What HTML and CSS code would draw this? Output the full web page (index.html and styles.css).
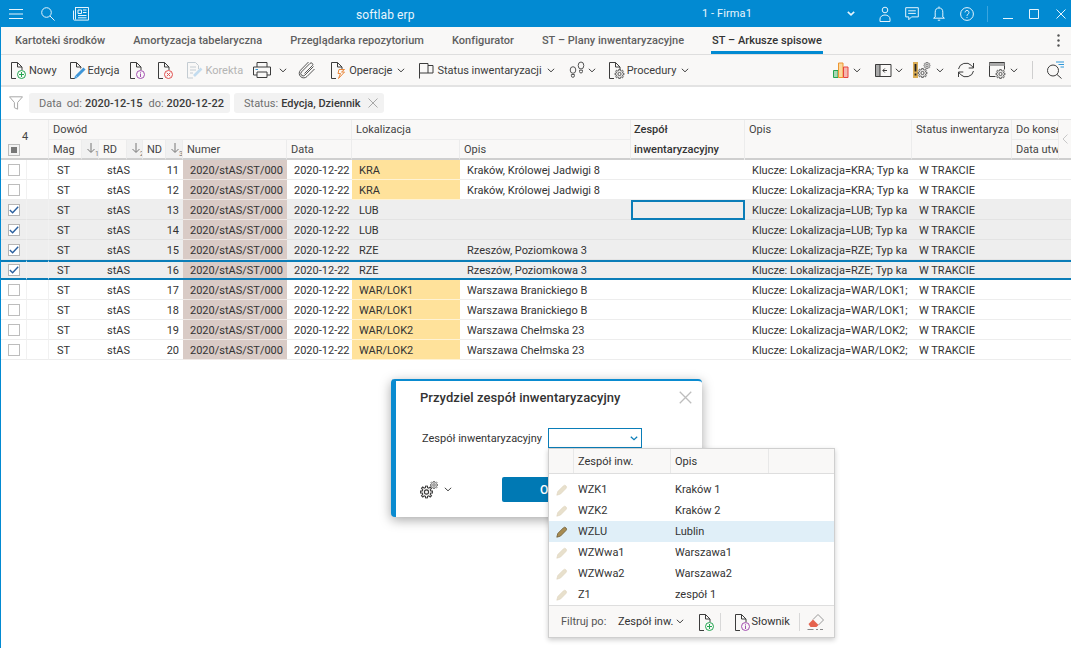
FILE: index.html
```html
<!DOCTYPE html>
<html lang="pl">
<head>
<meta charset="utf-8">
<title>softlab erp</title>
<link rel="stylesheet" href="styles.css">
</head>
<body>
<svg class="defs" aria-hidden="true">
  <symbol id="chev" viewBox="0 0 8 5"><path d="M.8 .8 4 3.8 7.2 .8"/></symbol>
  <symbol id="doc" viewBox="0 0 18 18"><path d="M2.5 17.500V1.500h6l4.500 4.500v3M8.500 1.500V6H13M2.500 17.500H7"/></symbol>
  <symbol id="cog" viewBox="0 0 10 10"><polygon points="8.30,4.18 9.75,4.33 9.75,5.67 8.30,5.82 7.91,6.75 8.83,7.89 7.89,8.83 6.75,7.91 5.82,8.30 5.67,9.75 4.33,9.75 4.18,8.30 3.25,7.91 2.11,8.83 1.17,7.89 2.09,6.75 1.70,5.82 .25,5.67 .25,4.33 1.70,4.18 2.09,3.25 1.17,2.11 2.11,1.17 3.25,2.09 4.18,1.70 4.33,.25 5.67,.25 5.82,1.70 6.75,2.09 7.89,1.17 8.83,2.11 7.91,3.25"/><circle cx="5" cy="5" r="1.6"/></symbol>
  <symbol id="pen" viewBox="0 0 12 12"><path d="M.8 11.200 1.800 7.400 7.300 1.900a1.800 1.800 0 0 1 2.700 2.600L4.500 10.100z"/></symbol>
</svg>

<header class="titlebar">
  <svg class="ti ham" viewBox="0 0 14 12"><path d="M0 1.500h14M0 6h14M0 10.500h14"/></svg>
  <svg class="ti sea" viewBox="0 0 14 14"><circle cx="5.500" cy="5.500" r="4.800"/><path d="m9 9 4.600 4.600"/></svg>
  <svg class="ti news" viewBox="0 0 16 14"><path d="M2 .5h13.500v12.600H1.200A.8.8 0 0 1 .5 12.300V3.500M2.500 .5v12M5 3h3.500v3.500H5zM10 3h3.500M10 5.500h3.500M5 8.500h8.500M5 10.800h8.500"/></svg>
  <div class="brand">softlab erp</div>
  <div class="firm">1 - Firma1</div>
  <svg class="ti chv" viewBox="0 0 8 5"><path d="M.8 .8 4 3.800 7.200 .8" stroke-width="1.600"/></svg>
  <svg class="ti user" viewBox="0 0 12 16"><circle cx="6" cy="4" r="2.800"/><path d="M1 15.500V13a5 4 0 0 1 10 0v2.500z"/></svg>
  <svg class="ti chat" viewBox="0 0 14 14"><path d="M.7 .7h12.600v9.200H6.500l-2.700 2.800V9.900H.7zM3.200 3.800h7.600M3.200 6.400h7.600"/></svg>
  <svg class="ti bell" viewBox="0 0 12 15"><path d="M6 .5v1.400M2.200 11V6.200a3.800 4.200 0 0 1 7.600 0V11l1.600 1.200H.6zM4.800 14.200h2.400"/></svg>
  <svg class="ti help" viewBox="0 0 14 14"><circle cx="7" cy="7" r="6.400"/><path d="M5 5.400a2 2 0 1 1 3 1.800c-.7.4-1 .8-1 1.600M7 10v.9"/></svg>
  <span class="tsep"></span>
  <svg class="ti min" viewBox="0 0 10 10"><path d="M0 9.500h10"/></svg>
  <svg class="ti max" viewBox="0 0 10 10"><path d="M.5 .5h9v9h-9z"/></svg>
  <svg class="ti cls" viewBox="0 0 10 10"><path d="m.5 .5 9 9M9.500 .5l-9 9"/></svg>
</header>

<nav class="tabs">
  <a class="tab">Kartoteki środków</a>
  <a class="tab">Amortyzacja tabelaryczna</a>
  <a class="tab">Przeglądarka repozytorium</a>
  <a class="tab">Konfigurator</a>
  <a class="tab">ST – Plany inwentaryzacyjne</a>
  <a class="tab active">ST – Arkusze spisowe</a>
  <svg class="kebab" viewBox="0 0 3 13"><circle cx="1.500" cy="1.500" r="1.200"/><circle cx="1.500" cy="6.500" r="1.200"/><circle cx="1.500" cy="11.500" r="1.200"/></svg>
</nav>

<div class="toolbar">
  <span class="tool"><svg class="ic"><use href="#doc"/><circle class="g" cx="12.500" cy="13.500" r="4"/><path class="g" d="M12.500 11v5M10 13.500h5"/></svg><span>Nowy</span></span>
  <span class="tool m11"><svg class="ic"><use href="#doc"/><path class="penbg" d="m16.500 7.500-8 8"/><path class="bluepen" d="m16.500 7.500-8 8"/><path class="bluetip" d="m6.200 17.800.9-3.200 2.300 2.300z"/></svg><span>Edycja</span></span>
  <span class="tool m9"><svg class="ic"><use href="#doc"/><circle class="pu" cx="12.500" cy="13.500" r="4"/><path class="pu" d="M12.500 12.500v3.500M12.500 10.800v.9"/></svg></span>
  <span class="tool m10"><svg class="ic"><use href="#doc"/><circle class="re" cx="12.500" cy="13.500" r="4"/><path class="re" d="m10.800 11.800 3.400 3.400M14.200 11.800l-3.400 3.400"/></svg></span>
  <span class="tool m11 off"><svg class="ic"><path class="fade" d="M2.500 17V1.500h8l3 3V8M2.500 17H8M5 6h6M5 9h6M5 12h3"/><path class="palepen" d="m16.500 7.500-7.500 7.500"/></svg><span>Korekta</span></span>
  <span class="tool m9"><svg class="ic wide" viewBox="0 0 20 18"><path d="M5 6V1.500h10V6M5 14H1.500V6h17v8H15M5 11h10v5.500H5z"/><path class="bl" d="M3.500 8.500H6"/></svg></span>
  <svg class="chv m7"><use href="#chev"/></svg>
  <span class="tool m11"><svg class="ic clipi" viewBox="0 0 18 18"><path d="M15.500 5.500 6.800 14.200a2.300 2.300 0 0 1-3.300-3.300L12 2.400a1.600 1.600 0 0 1 2.300 2.300L6.500 12.500M16.500 8 9 15.500a4.500 4.500 0 0 1-6.500-6.300L10.500 1"/></svg></span>
  <span class="tool m13"><svg class="ic"><use href="#doc"/><path class="or" d="M15.500 8.500H10l-1 4h2.500l-2 5 6-6.500h-3z"/></svg><span>Operacje</span></span>
  <svg class="chv m5"><use href="#chev"/></svg>
  <span class="tool m12"><svg class="ic" viewBox="0 0 18 18"><path d="M2.500 17.500V2.500h8.500v9.500H2.500M11 4.500h5v7.500h-5"/></svg><span>Status inwentaryzacji</span></span>
  <svg class="chv m5"><use href="#chev"/></svg>
  <span class="tool m13"><svg class="ic stepi" viewBox="0 0 18 18"><ellipse cx="5" cy="9" rx="2.800" ry="3.300"/><path d="M3.400 13.500h3v1.300a1.500 1.500 0 0 1-3 0z"/><ellipse cx="13" cy="4.500" rx="2.800" ry="3.500"/><path d="M11.500 9.200h3v1.300a1.500 1.500 0 0 1-3 0z"/></svg></span>
  <svg class="chv m2"><use href="#chev"/></svg>
  <span class="tool m11"><svg class="ic"><use href="#doc"/><use href="#cog" x="7.500" y="8" width="10" height="10"/></svg><span>Procedury</span></span>
  <svg class="chv m5"><use href="#chev"/></svg>

  <span class="tool right"><svg class="ic" viewBox="0 0 18 18"><path class="bg" d="M1.500 9.500H6v7H1.500z"/><path class="bo" d="M6.500 2H11v14.500H6.500z"/><path class="br" d="M11.500 6H16v10.500h-4.500z"/></svg></span>
  <svg class="chv m3"><use href="#chev"/></svg>
  <span class="tool m13"><svg class="ic" viewBox="0 0 18 18"><path class="grayfill" d="M1 3.500h5v12H1z"/><path d="M1.500 3.500H17v12H1.500zM6 3.500v12M13 9.500H9M10.800 7.500l-2 2 2 2"/></svg></span>
  <svg class="chv m3"><use href="#chev"/></svg>
  <span class="tool m9"><svg class="ic" viewBox="0 0 18 18"><path class="amber" d="M1 1h5v16H1z"/><path class="blk" d="M3.500 3v7.500M3.500 12.500v2"/><use href="#cog" x="5.500" y="7" width="10" height="10"/><use href="#cog" x="11.500" y="1" width="7" height="7"/></svg></span>
  <svg class="chv m6"><use href="#chev"/></svg>
  <span class="tool m13"><svg class="ic" viewBox="0 0 18 18"><path d="M1.500 8a7.500 7 0 0 1 13-3.500l2 2.500M16.500 2v5h-4.800M16.500 10a7.500 7 0 0 1-13 3.500l-2-2.500M1.500 16v-5h4.800"/></svg></span>
  <span class="tool m13"><svg class="ic" viewBox="0 0 18 18"><path d="M1.500 15.500v-14h15v7M1.500 15.500h6"/><path class="grayfill" d="M1.500 2h15v3h-15z"/><use href="#cog" x="7.500" y="8" width="10" height="10"/></svg></span>
  <svg class="chv m4"><use href="#chev"/></svg>
  <span class="vsep"></span>
  <span class="tool m13"><svg class="ic" viewBox="0 0 18 18"><circle cx="7" cy="9.500" r="5.500"/><path d="m11 13.500 4.500 4"/><path class="bl" d="M10 1h8M12.500 3.500H18M14.500 6H18"/></svg></span>
</div>

<div class="filterbar">
  <svg class="funnel" viewBox="0 0 14 14"><path d="M.5 .8h13L8.600 6.500v6.700l-3.200-1.500V6.500z"/></svg>
  <div class="chip"><span class="lab">Data</span><span class="lab o1">od:</span><b>2020-12-15</b><span class="lab o2">do:</span><b>2020-12-22</b></div>
  <div class="chip two"><span class="lab">Status:</span><b>Edycja, Dziennik</b><svg class="x" viewBox="0 0 10 10"><path d="m.5 .5 9 9M9.500 .5l-9 9"/></svg></div>
</div>

<table class="grid">
  <colgroup>
    <col class="c25"><col class="c22"><col class="c33"><col class="c17"><col class="c28"><col class="c16"><col class="c24"><col class="c17">
    <col class="c104"><col class="c65"><col class="c108"><col class="c171"><col class="c114"><col class="c167"><col class="c100"><col class="c47"><col class="c13">
  </colgroup>
  <thead>
    <tr>
      <th colspan="2" rowspan="2" class="corner"><span class="cnt">4</span><span class="cb head"><i></i></span></th>
      <th colspan="8">Dowód</th>
      <th colspan="2">Lokalizacja</th>
      <th rowspan="2" class="strong">Zespół<br>inwentaryzacyjny</th>
      <th rowspan="2" class="top">Opis</th>
      <th rowspan="2" class="top">Status inwentaryza</th>
      <th>Do konse</th>
      <th rowspan="2" class="arrow"><svg viewBox="0 0 6 10"><path d="M5.500 .5 1 5l4.500 4.500"/></svg></th>
    </tr>
    <tr>
      <th>Mag</th>
      <th class="sort"><svg viewBox="0 0 14 14"><path d="M5 1v9M1.500 7 5 10.500 8.500 7"/><text x="9" y="13.500">1</text></svg></th>
      <th>RD</th>
      <th class="sort"><svg viewBox="0 0 14 14"><path d="M5 1v9M1.500 7 5 10.500 8.500 7"/><text x="9" y="13.500">2</text></svg></th>
      <th>ND</th>
      <th class="sort"><svg viewBox="0 0 14 14"><path d="M5 1v9M1.500 7 5 10.500 8.500 7"/><text x="9" y="13.500">3</text></svg></th>
      <th>Numer</th>
      <th>Data</th>
      <th></th>
      <th>Opis</th>
      <th>Data utw</th>
    </tr>
  </thead>
  <tbody>
    <tr><td class="ck"><span class="cb"></span></td><td></td><td colspan="2" class="p8">ST</td><td colspan="2" class="p8">stAS</td><td colspan="2" class="nd">11</td><td class="num">2020/stAS/ST/000</td><td class="p7">2020-12-22</td><td class="yel">KRA</td><td class="p7">Kraków, Królowej Jadwigi 8</td><td></td><td class="p7">Klucze: Lokalizacja=KRA; Typ ka</td><td class="p7">W TRAKCIE</td><td colspan="2"></td></tr>
    <tr><td class="ck"><span class="cb"></span></td><td></td><td colspan="2" class="p8">ST</td><td colspan="2" class="p8">stAS</td><td colspan="2" class="nd">12</td><td class="num">2020/stAS/ST/000</td><td class="p7">2020-12-22</td><td class="yel">KRA</td><td class="p7">Kraków, Królowej Jadwigi 8</td><td></td><td class="p7">Klucze: Lokalizacja=KRA; Typ ka</td><td class="p7">W TRAKCIE</td><td colspan="2"></td></tr>
    <tr class="sel"><td class="ck"><span class="cb on"><svg viewBox="0 0 10 8"><path d="M.8 4 3.600 6.800 9.200 .8"/></svg></span></td><td></td><td colspan="2" class="p8">ST</td><td colspan="2" class="p8">stAS</td><td colspan="2" class="nd">13</td><td class="num">2020/stAS/ST/000</td><td class="p7">2020-12-22</td><td class="p7">LUB</td><td></td><td class="focus"></td><td class="p7">Klucze: Lokalizacja=LUB; Typ ka</td><td class="p7">W TRAKCIE</td><td colspan="2"></td></tr>
    <tr class="sel"><td class="ck"><span class="cb on"><svg viewBox="0 0 10 8"><path d="M.8 4 3.600 6.800 9.200 .8"/></svg></span></td><td></td><td colspan="2" class="p8">ST</td><td colspan="2" class="p8">stAS</td><td colspan="2" class="nd">14</td><td class="num">2020/stAS/ST/000</td><td class="p7">2020-12-22</td><td class="p7">LUB</td><td></td><td></td><td class="p7">Klucze: Lokalizacja=LUB; Typ ka</td><td class="p7">W TRAKCIE</td><td colspan="2"></td></tr>
    <tr class="sel"><td class="ck"><span class="cb on"><svg viewBox="0 0 10 8"><path d="M.8 4 3.600 6.800 9.200 .8"/></svg></span></td><td></td><td colspan="2" class="p8">ST</td><td colspan="2" class="p8">stAS</td><td colspan="2" class="nd">15</td><td class="num">2020/stAS/ST/000</td><td class="p7">2020-12-22</td><td class="p7">RZE</td><td class="p7">Rzeszów, Poziomkowa 3</td><td></td><td class="p7">Klucze: Lokalizacja=RZE; Typ ka</td><td class="p7">W TRAKCIE</td><td colspan="2"></td></tr>
    <tr class="sel cur"><td class="ck"><span class="cb on"><svg viewBox="0 0 10 8"><path d="M.8 4 3.600 6.800 9.200 .8"/></svg></span></td><td></td><td colspan="2" class="p8">ST</td><td colspan="2" class="p8">stAS</td><td colspan="2" class="nd">16</td><td class="num">2020/stAS/ST/000</td><td class="p7">2020-12-22</td><td class="p7">RZE</td><td class="p7">Rzeszów, Poziomkowa 3</td><td></td><td class="p7">Klucze: Lokalizacja=RZE; Typ ka</td><td class="p7">W TRAKCIE</td><td colspan="2"></td></tr>
    <tr><td class="ck"><span class="cb"></span></td><td></td><td colspan="2" class="p8">ST</td><td colspan="2" class="p8">stAS</td><td colspan="2" class="nd">17</td><td class="num">2020/stAS/ST/000</td><td class="p7">2020-12-22</td><td class="yel">WAR/LOK1</td><td class="p7">Warszawa Branickiego B</td><td></td><td class="p7">Klucze: Lokalizacja=WAR/LOK1;</td><td class="p7">W TRAKCIE</td><td colspan="2"></td></tr>
    <tr><td class="ck"><span class="cb"></span></td><td></td><td colspan="2" class="p8">ST</td><td colspan="2" class="p8">stAS</td><td colspan="2" class="nd">18</td><td class="num">2020/stAS/ST/000</td><td class="p7">2020-12-22</td><td class="yel">WAR/LOK1</td><td class="p7">Warszawa Branickiego B</td><td></td><td class="p7">Klucze: Lokalizacja=WAR/LOK1;</td><td class="p7">W TRAKCIE</td><td colspan="2"></td></tr>
    <tr><td class="ck"><span class="cb"></span></td><td></td><td colspan="2" class="p8">ST</td><td colspan="2" class="p8">stAS</td><td colspan="2" class="nd">19</td><td class="num">2020/stAS/ST/000</td><td class="p7">2020-12-22</td><td class="yel">WAR/LOK2</td><td class="p7">Warszawa Chełmska 23</td><td></td><td class="p7">Klucze: Lokalizacja=WAR/LOK2;</td><td class="p7">W TRAKCIE</td><td colspan="2"></td></tr>
    <tr><td class="ck"><span class="cb"></span></td><td></td><td colspan="2" class="p8">ST</td><td colspan="2" class="p8">stAS</td><td colspan="2" class="nd">20</td><td class="num">2020/stAS/ST/000</td><td class="p7">2020-12-22</td><td class="yel">WAR/LOK2</td><td class="p7">Warszawa Chełmska 23</td><td></td><td class="p7">Klucze: Lokalizacja=WAR/LOK2;</td><td class="p7">W TRAKCIE</td><td colspan="2"></td></tr>
  </tbody>
</table>

<section class="dialog">
  <div class="dlg-head">
    <h2>Przydziel zespół inwentaryzacyjny</h2>
    <svg class="dlg-x" viewBox="0 0 12 12"><path d="m.7 .7 10.600 10.600M11.300 .7 .7 11.300"/></svg>
  </div>
  <div class="dlg-field">
    <label>Zespół inwentaryzacyjny</label>
    <div class="combo"><svg viewBox="0 0 8 5"><path d="M.8 .8 4 3.800 7.200 .8"/></svg></div>
  </div>
  <div class="dlg-foot">
    <svg class="ic gears" viewBox="0 0 18 18"><use href="#cog" x="0" y="4.500" width="13" height="13"/><use href="#cog" x="10" y="0" width="8" height="8"/></svg>
    <svg class="chv m6"><use href="#chev"/></svg>
    <button class="ok">OK</button>
  </div>
</section>

<section class="drop">
  <div class="drop-head"><span class="dh c0"></span><span class="dh c1">Zespół inw.</span><span class="dh c2">Opis</span><span class="dh c3"></span></div>
  <div class="drop-body">
    <div class="drow"><svg class="pn"><use href="#pen"/></svg><span class="d1">WZK1</span><span>Kraków 1</span></div>
    <div class="drow"><svg class="pn"><use href="#pen"/></svg><span class="d1">WZK2</span><span>Kraków 2</span></div>
    <div class="drow hi"><svg class="pn"><use href="#pen"/></svg><span class="d1">WZLU</span><span>Lublin</span></div>
    <div class="drow"><svg class="pn"><use href="#pen"/></svg><span class="d1">WZWwa1</span><span>Warszawa1</span></div>
    <div class="drow"><svg class="pn"><use href="#pen"/></svg><span class="d1">WZWwa2</span><span>Warszawa2</span></div>
    <div class="drow"><svg class="pn"><use href="#pen"/></svg><span class="d1">Z1</span><span>zespół 1</span></div>
  </div>
  <div class="drop-foot">
    <span class="flt">Filtruj po:</span>
    <span class="fval">Zespół inw.</span>
    <svg class="chv m3"><use href="#chev"/></svg>
    <svg class="ic m13"><use href="#doc"/><circle class="g" cx="12.500" cy="13.500" r="4"/><path class="g" d="M12.500 11v5M10 13.500h5"/></svg>
    <span class="fsep"></span>
    <span class="tool slow"><svg class="ic"><use href="#doc"/><circle class="pu" cx="12.500" cy="13.500" r="4"/><path class="pu" d="M12.500 12.500v3.500M12.500 10.800v.9"/></svg><span>Słownik</span></span>
    <span class="fsep s2"></span>
    <svg class="ic erase" viewBox="0 0 18 18"><path class="erl" d="M6 6.500l5-5 5.500 5.500-5 5"/><path class="redf" d="M1.500 11 6 6.500l5.500 5.500-2 2H3.500z"/><path class="dash" d="M.5 16.500h6M9 16.500h2M13 16.500h3"/></svg>
  </div>
</section>
</body>
</html>
```

FILE: styles.css
```css
* { box-sizing: border-box; }
html, body { margin: 0; padding: 0; height: 100%; }
body {
  width: 1071px;
  height: 648px;
  overflow: hidden;
  position: relative;
  background: #fff;
  border-left: 1px solid #028ad2;
  font-family: Roboto, "Liberation Sans", sans-serif;
  font-size: 11px;
  color: #333;
}
.defs { width: 0; height: 0; position: absolute; }
svg { display: block; flex: none; }

.titlebar {
  height: 27px;
  margin-left: -1px;
  background: #028ad2;
  display: flex;
  align-items: center;
  color: #e9f5fc;
}
.ti { fill: none; stroke: #e6f4fc; stroke-width: 1; }
.ham { width: 14px; height: 12px; margin-left: 9px; }
.sea { width: 14px; height: 14px; margin-left: 18px; }
.news { width: 16px; height: 14px; margin-left: 18px; }
.brand { margin-left: 267px; width: 60px; font-size: 12px; padding-top: 3px; letter-spacing: .1px; white-space: nowrap; }
.firm { margin-left: 286px; width: 60px; font-size: 11px; letter-spacing: .1px; white-space: nowrap; }
.chv { width: 8px; height: 5px; }
.titlebar .ti.chv { margin-left: 85px; }
.user { width: 12px; height: 16px; margin-left: 24px; }
.chat { width: 14px; height: 14px; margin-left: 14px; }
.bell { width: 12px; height: 15px; margin-left: 14px; }
.help { width: 14px; height: 14px; margin-left: 15px; }
.tsep { width: 1px; height: 16px; background: #3aa5df; margin-left: 13px; }
.min { width: 10px; height: 10px; margin-left: 15px; }
.max { width: 10px; height: 10px; margin-left: 16px; }
.cls { width: 10px; height: 10px; margin-left: 17px; }

.tabs {
  height: 28px;
  background: #f9f8f7;
  border-bottom: 1px solid #dedede;
  display: flex;
  padding-left: 14px;
  font-weight: 500;
  color: #5f5f5f;
  position: relative;
}
.tab { display: block; line-height: 28px; margin-right: 28px; white-space: nowrap; letter-spacing: .04px; }
.tab.active { color: #333; border-bottom: 3px solid #028ad2; margin: 0 0 -1px -1px; padding: 0 1px; height: 27px; }
.kebab { width: 3px; height: 13px; fill: #555; position: absolute; right: 11px; top: 7px; }

.toolbar {
  height: 32px;
  background: #f9f8f7;
  border-bottom: 2px solid #e3e3e3;
  display: flex;
  align-items: center;
  padding: 0 7px 0 8px;
  color: #3c3c3c;
  white-space: nowrap;
}
.tool { display: flex; align-items: center; gap: 2px; }
.ic { width: 18px; height: 18px; fill: none; stroke: #3c3c3c; stroke-width: 1; overflow: visible; }
.ic.wide { width: 20px; }
#chev path { fill: none; stroke: #444; stroke-width: 1; }
#doc path { fill: none; stroke: #3c3c3c; stroke-width: 1; }
#cog polygon { fill: #f9f8f7; stroke: #3c3c3c; stroke-width: .85; }
#cog circle { fill: none; stroke: #3c3c3c; stroke-width: .85; }
.m2 { margin-left: 2px; }
.m3 { margin-left: 3px; }
.m4 { margin-left: 4px; }
.m5 { margin-left: 5px; }
.m6 { margin-left: 6px; }
.m7 { margin-left: 7px; }
.m9 { margin-left: 9px; }
.m10 { margin-left: 10px; }
.m11 { margin-left: 11px; }
.m12 { margin-left: 12px; }
.m13 { margin-left: 13px; }
.right { margin-left: auto; }
.off { color: #b4b4b4; }
.g { stroke: #22a650; fill: none; }
.pu { stroke: #a34fb0; fill: none; }
.re { stroke: #e2504f; fill: none; }
.penbg { stroke: #f9f8f7; stroke-width: 5; }
.bluepen { stroke: #3f96d8; stroke-width: 3; }
.bluetip { fill: #3f96d8; stroke: none; }
.fade { stroke: #c4ccd2; }
.palepen { stroke: #c3dcef; stroke-width: 2.6; }
.bl { stroke: #2d98da; }
.or { stroke: #e9873a; fill: none; }
.clipi path, .stepi path, .stepi ellipse { stroke: #555; }
.bg { stroke: #25a550; fill: #a9d8b5; }
.bo { stroke: #ee9530; fill: #fad99d; }
.br { stroke: #e6443f; fill: #f6b5ae; }
.grayfill { fill: #a9a9a9; stroke: none; }
.amber { fill: #dcae55; stroke: none; }
.blk { stroke: #222; stroke-width: 1.8; }
.vsep { width: 1px; height: 18px; background: #cfcfcf; margin-left: 14px; }

.filterbar {
  height: 33px;
  display: flex;
  align-items: center;
  padding-left: 8px;
  border-bottom: 1px solid #e3e3e3;
}
.funnel { width: 14px; height: 14px; fill: none; stroke: #a8a8a8; }
.chip {
  height: 20px;
  background: #f2f2f2;
  border-radius: 3px;
  margin-left: 6px;
  padding-left: 10px;
  width: 201px;
  display: flex;
  align-items: center;
  white-space: nowrap;
}
.chip.two { width: 150px; margin-left: 4px; }
.chip b { font-weight: 500; color: #3a3a3a; margin-left: 3px; }
.lab { color: #6f6f6f; }
.o1 { margin-left: 5px; }
.o2 { margin-left: 6px; }
.x { width: 10px; height: 10px; fill: none; stroke: #a8a8a8; margin-left: 7px; }

.grid {
  border-collapse: separate;
  border-spacing: 0;
  table-layout: fixed;
  width: 1070px;
}
.c25 { width: 26px; } .c22 { width: 22px; } .c33 { width: 33px; } .c17 { width: 17px; }
.c28 { width: 28px; } .c16 { width: 16px; } .c24 { width: 23px; } .c104 { width: 104px; }
.c65 { width: 65px; } .c108 { width: 108px; } .c171 { width: 171px; } .c114 { width: 114px; }
.c167 { width: 167px; } .c100 { width: 100px; } .c47 { width: 47px; } .c13 { width: 12px; }
.grid th {
  height: 20px;
  padding: 0 0 0 4px;
  background: #f9f8f7;
  font-weight: 400;
  text-align: left;
  color: #444;
  white-space: nowrap;
  overflow: hidden;
  border-right: 1px solid #ececec;
  border-bottom: 1px solid #ececec;
}
.grid thead tr:nth-child(2) th { border-bottom: 2px solid #cfcfcf; }
.grid th.top, .grid th.corner, .grid th.arrow { border-bottom: 2px solid #cfcfcf; }
.grid th.strong {
  font-weight: 500;
  color: #333;
  line-height: 20px;
  vertical-align: top;
  padding-left: 3px;
  border-bottom: 0;
  box-shadow: inset 0 -2px 0 #cfcfcf;
}
.grid th.top { vertical-align: top; line-height: 19px; }
.corner { position: relative; }
.cnt { position: absolute; left: 21px; top: 10px; }
.cb {
  display: block;
  width: 12px;
  height: 12px;
  background: #fff;
  border: 1px solid #bdbdbd;
}
.cb.head { position: absolute; left: 7px; top: 24px; background: #f3f3f3; padding: 2px; }
.cb.head i { display: block; width: 6px; height: 6px; background: #777; }
.cb.on { border-color: #b5b5b5; }
.cb.on svg { width: 10px; height: 8px; margin-top: 1px; fill: none; stroke: #2a5f9e; stroke-width: 1.4; }
.grid th.sort { background: #f1f1f1; padding: 0 0 0 4px; }
.sort svg { width: 14px; height: 14px; fill: none; stroke: #777; }
.sort text { font-size: 7px; font-family: Roboto, sans-serif; fill: #777; stroke: none; }
.grid th.arrow { padding: 0 0 0 3px; border-right: 0; }
.arrow svg { width: 6px; height: 10px; fill: none; stroke: #c8c8c8; }

.grid td {
  height: 20px;
  padding: 1px 0 0;
  border-bottom: 1px solid #ededed;
  white-space: nowrap;
  overflow: hidden;
  color: #333;
}
.grid td.ck { padding-left: 7px; border-right: 1px solid #f1f1f1; }
.grid td:nth-child(2) { border-right: 1px solid #f1f1f1; }
.p8 { padding-left: 8px !important; }
.p7 { padding-left: 7px !important; }
.nd { text-align: right; padding-right: 4px !important; }
.grid td.num { background: #d9cbc6; padding-left: 7px; border-bottom-color: #efe9e6; }
.grid td.yel { background: #ffe29b; padding-left: 7px; border-bottom-color: #fff3d4; }
.sel td { background: #eeeeee; border-bottom-color: #e3e3e3; }
.grid .cur td { border-top: 2px solid #0a7db8; border-bottom: 2px solid #0a7db8; padding-top: 0; }
.grid .cur td.num { border-bottom-color: #0a7db8; }
.grid td.focus { border: 2px solid #0a7db8; }

.dialog {
  position: absolute;
  left: 390px;
  top: 379px;
  width: 311px;
  height: 138px;
  background: #fff;
  border-left: 5px solid #0a8bd0;
  border-top: 2px solid #0a8bd0;
  border-radius: 4px;
  box-shadow: 0 3px 12px rgba(0, 0, 0, .35);
  display: flex;
  flex-direction: column;
}
.dlg-head { height: 31px; display: flex; align-items: center; justify-content: space-between; padding: 2px 10px 0 24px; }
.dlg-head h2 { margin: 0; font-size: 13px; font-weight: 500; color: #333; letter-spacing: .06px; }
.dlg-x { width: 13px; height: 13px; fill: none; stroke: #bdbdbd; stroke-width: 1.2; }
.dlg-field { display: flex; align-items: center; padding: 16px 0 0 26px; }
.dlg-field label { width: 126px; white-space: nowrap; }
.combo { width: 94px; height: 20px; border: 1px solid #0a7db8; background: #fff; position: relative; }
.combo svg { position: absolute; right: 3px; top: 7px; width: 8px; height: 5px; fill: none; stroke: #0a7db8; stroke-width: 1.2; }
.dlg-foot { display: flex; align-items: center; padding: 29px 0 0 24px; }
.gears { width: 18px; height: 18px; }
.ok {
  margin-left: 50px;
  width: 92px;
  height: 25px;
  background: #0079b4;
  border: 0;
  border-radius: 2px;
  color: #fff;
  font: 500 12px Roboto, sans-serif;
}

.drop {
  position: absolute;
  left: 547px;
  top: 448px;
  width: 287px;
  height: 190px;
  background: #fff;
  border: 1px solid #cfcfcf;
  box-shadow: 0 2px 5px rgba(0, 0, 0, .2);
  display: flex;
  flex-direction: column;
}
.drop-head { height: 25px; flex: none; background: #f9f8f7; border-bottom: 1px solid #dedede; display: flex; }
.dh { border-right: 1px solid #e8e8e8; padding-left: 4px; line-height: 25px; }
.c0 { width: 25px; }
.c1 { width: 97px; }
.c2 { width: 98px; }
.c3 { border-right: 0; }
.drop-body { padding-top: 5px; flex: 1; }
.drow { height: 21px; display: flex; align-items: center; padding-left: 7px; }
.drow.hi { background: #e0eff8; }
.pn { width: 12px; height: 12px; margin-right: 10px; fill: #e8e0cc; stroke: #ddd4bd; stroke-width: .6; }
.drow.hi .pn { fill: #a88c52; stroke: #6d5a33; stroke-width: .8; }
.d1 { width: 97px; }
.drop-foot {
  height: 32px;
  flex: none;
  background: #f9f8f7;
  border-top: 1px solid #dedede;
  display: flex;
  align-items: center;
  padding-left: 12px;
}
.flt { color: #555; width: 57px; }
.fval { white-space: nowrap; }
.fsep { width: 1px; height: 18px; background: #d8d8d8; margin: 0 12px 0 5px; }
.fsep.s2 { margin: 0 7px 0 9px; }
.slow { gap: 0; }
.erase .redf { fill: #e5634f; stroke: none; }
.erase .erl { stroke: #999; }
.erase .dash { stroke: #888; }
```
